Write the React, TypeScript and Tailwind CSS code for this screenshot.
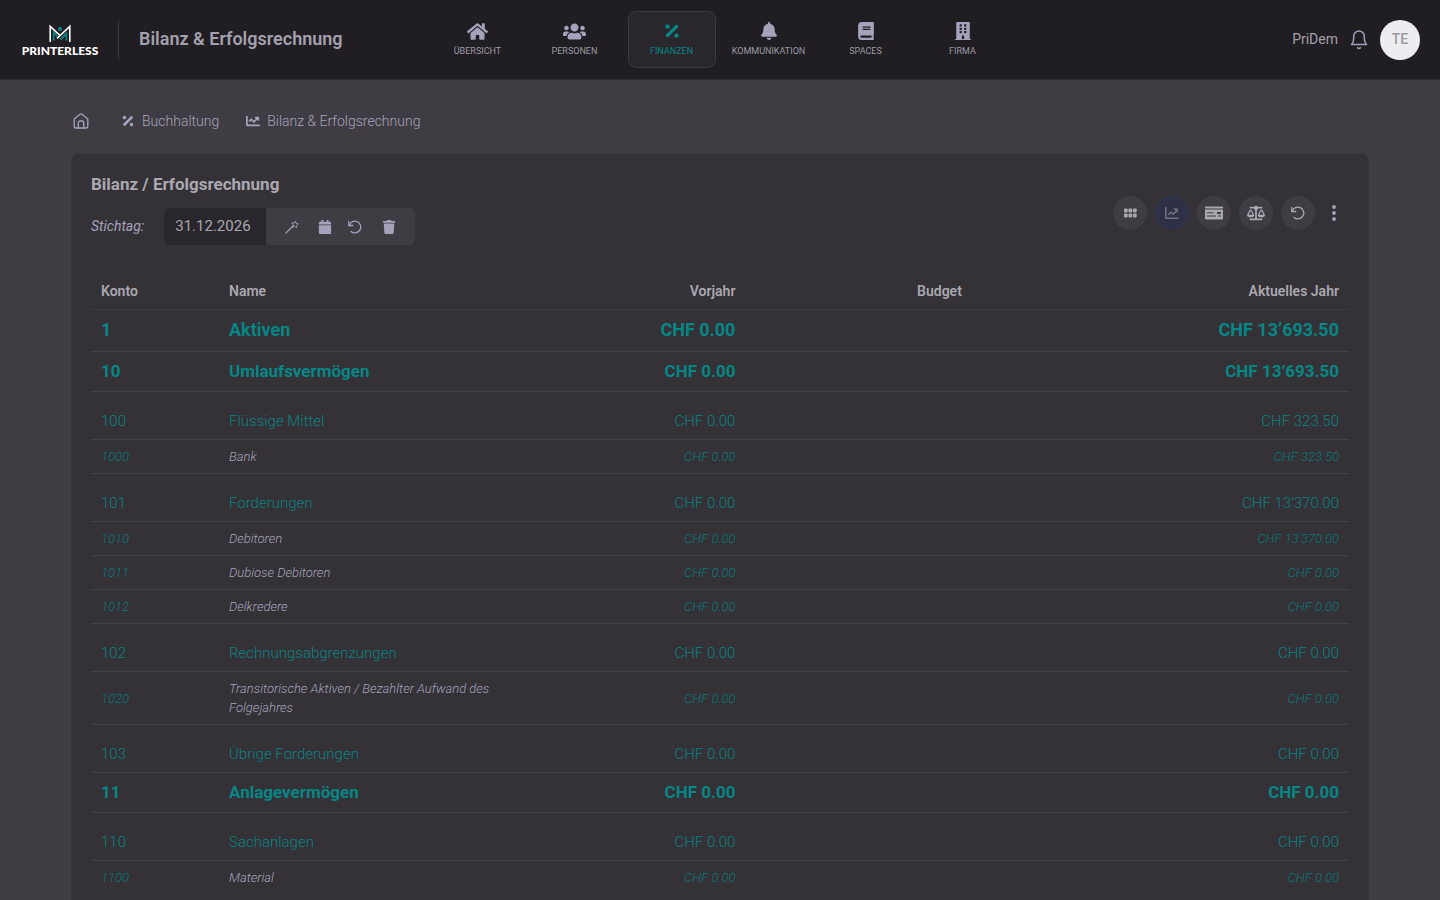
import type { ReactNode } from "react";
import {
  FaBalanceScale,
  FaBell,
  FaBook,
  FaBuilding,
  FaCalendar,
  FaChartLine,
  FaHome,
  FaPercentage,
  FaTrash,
  FaUsers,
} from "react-icons/fa";

type Level = 1 | 2 | 3 | 4;

interface Account {
  no: string;
  name: string;
  level: Level;
  prev: string;
  current: string;
}

const accounts: Account[] = [
  { no: "1", name: "Aktiven", level: 1, prev: "CHF 0.00", current: "CHF 13’693.50" },
  { no: "10", name: "Umlaufsvermögen", level: 2, prev: "CHF 0.00", current: "CHF 13’693.50" },
  { no: "100", name: "Flüssige Mittel", level: 3, prev: "CHF 0.00", current: "CHF 323.50" },
  { no: "1000", name: "Bank", level: 4, prev: "CHF 0.00", current: "CHF 323.50" },
  { no: "101", name: "Forderungen", level: 3, prev: "CHF 0.00", current: "CHF 13’370.00" },
  { no: "1010", name: "Debitoren", level: 4, prev: "CHF 0.00", current: "CHF 13’370.00" },
  { no: "1011", name: "Dubiose Debitoren", level: 4, prev: "CHF 0.00", current: "CHF 0.00" },
  { no: "1012", name: "Delkredere", level: 4, prev: "CHF 0.00", current: "CHF 0.00" },
  { no: "102", name: "Rechnungsabgrenzungen", level: 3, prev: "CHF 0.00", current: "CHF 0.00" },
  { no: "1020", name: "Transitorische Aktiven / Bezahlter Aufwand des Folgejahres", level: 4, prev: "CHF 0.00", current: "CHF 0.00" },
  { no: "103", name: "Übrige Forderungen", level: 3, prev: "CHF 0.00", current: "CHF 0.00" },
  { no: "11", name: "Anlagevermögen", level: 2, prev: "CHF 0.00", current: "CHF 0.00" },
  { no: "110", name: "Sachanlagen", level: 3, prev: "CHF 0.00", current: "CHF 0.00" },
  { no: "1100", name: "Material", level: 4, prev: "CHF 0.00", current: "CHF 0.00" },
];

const rowStyles: Record<Level, string> = {
  1: "text-[18px] leading-[25px] font-bold text-[#058785] *:pt-[7px] *:pb-[9px]",
  2: "text-[17px] leading-[23px] font-bold text-[#058785] *:py-2",
  3: "text-[15px] leading-[23px] font-light text-[#078482] *:pt-[18px] *:pb-[6px]",
  4: "text-[13px] leading-[19px] font-light italic text-[#087c7a] *:py-[7px]",
};

const navItems = [
  { label: "ÜBERSICHT", icon: <FaHome size={21} /> },
  { label: "PERSONEN", icon: <FaUsers size={23} /> },
  { label: "FINANZEN", icon: <FaPercentage size={18} />, active: true },
  { label: "KOMMUNIKATION", icon: <FaBell size={18} /> },
  { label: "SPACES", icon: <FaBook size={18} /> },
  { label: "FIRMA", icon: <FaBuilding size={18} /> },
];

function Logo() {
  return (
    <a href="#" aria-label="Printerless" className="flex w-[78px] flex-col items-center pt-0.5 pl-0.5">
      <svg width="22" height="19" viewBox="0 0 22 19" fill="none">
        <path d="M4.700 16.500V8.500L8.500 12.500M17.300 16.500V9.500L11.500 15.500" stroke="#0b8583" strokeWidth="1.800" />
        <circle cx="11" cy="5" r="2" fill="#0b8583" />
        <path d="M1.200 18V2.300L11 11.500" stroke="#fff" strokeWidth="1.600" />
        <path d="M8 14.500L20.800 2.300V18" stroke="#fff" strokeWidth="1.600" />
      </svg>
      <span className="mt-0.5 font-[Lato,sans-serif] text-[12px] leading-[12px] font-black text-white">PRINTERLESS</span>
    </a>
  );
}

function BellOutline() {
  return (
    <svg width="18" height="20" viewBox="0 0 18 20" fill="none" stroke="#a5a3bb" strokeWidth="1.500" strokeLinecap="round" strokeLinejoin="round">
      <path d="M1.500 14.500C3 13 3.700 11 3.700 8.500V6.300a5.300 5.300 0 0 1 10.600 0V8.500c0 2.500.7 4.500 2.200 6z" />
      <path d="M7.500 17.800c.8.900 2.200.9 3 0" />
    </svg>
  );
}

function HomeOutline() {
  return (
    <svg width="16" height="16" viewBox="0 0 16 16" fill="none" stroke="#a5a3bb" strokeWidth="1.300" strokeLinecap="round" strokeLinejoin="round">
      <path d="M1.200 6.500q0-.7.500-1.100L7.100 1.200q.9-.6 1.800 0l5.400 4.200q.5.400.5 1.100v7.100a1.400 1.400 0 0 1-1.400 1.400H2.600a1.400 1.400 0 0 1-1.400-1.400z" />
      <path d="M5.300 15V9.500a1.500 1.500 0 0 1 1.500-1.500h2.400a1.500 1.500 0 0 1 1.500 1.500V15" />
    </svg>
  );
}

function Wand() {
  return (
    <svg width="14" height="14" viewBox="0 0 14 14" fill="none" stroke="#a5a3bb" strokeLinecap="round" strokeLinejoin="round">
      <path d="M.8 13.200L8.500 5.500" strokeWidth="1.200" />
      <path d="M7 2.800l2.200.4L10.500 1l.6 2.400 2.300.5-1.900 1.500.3 2.400-2.100-1.300-2.100.7.600-2.200z" strokeWidth=".8" />
    </svg>
  );
}

function Undo() {
  return (
    <svg width="14" height="14" viewBox="0 0 14 14" fill="none" stroke="currentColor" strokeWidth="1.300" strokeLinecap="round" strokeLinejoin="round">
      <path d="M.8 1.500v4h4" />
      <path d="M1.200 5.300A5.900 5.900 0 1 1 3 11.500" />
    </svg>
  );
}

function Grid() {
  return (
    <svg width="13" height="10" viewBox="0 0 13 10" fill="currentColor">
      {[0, 4.500, 9].map((x) =>
        [0.5, 5.500].map((y) => <rect key={`${x}-${y}`} x={x} y={y} width="3.700" height="3.900" rx=".8" />),
      )}
    </svg>
  );
}

function ChartLines() {
  return (
    <svg width="14" height="12" viewBox="0 0 14 12" fill="none" stroke="currentColor" strokeWidth="1.600" strokeLinecap="round" strokeLinejoin="round">
      <path d="M.8.800v10.400h12.400" />
      <path d="M3.800 7.200L6 5l2.200 2.200L11.500 4" />
      <path d="M9.300 1.800h3.200v3.200z" fill="currentColor" strokeWidth=".8" />
    </svg>
  );
}

function MoneyCheck() {
  return (
    <svg width="18" height="14" viewBox="0 0 18 14" fill="currentColor">
      <path d="M.6.500h16.800q.6 0 .6.600V2.500H0V1.100Q0 .5.600.500z" />
      <path
        fillRule="evenodd"
        d="M0 3.500h18v9.300q0 .7-.7.700H.7q-.7 0-.7-.7zM2 6.300v1h6.500v-1zM2 9.500v1h9v-1zM12 6v2h4v-2zM13 9.500v1h3v-1z"
      />
    </svg>
  );
}

function Dots() {
  return (
    <svg width="4" height="16" viewBox="0 0 4 16" fill="currentColor">
      <circle cx="2" cy="2" r="1.900" />
      <circle cx="2" cy="8" r="1.900" />
      <circle cx="2" cy="14" r="1.900" />
    </svg>
  );
}

function RoundButton({ label, active, children }: { label: string; active?: boolean; children: ReactNode }) {
  return (
    <button
      aria-label={label}
      className={`flex size-[34px] items-center justify-center rounded-full ${active ? "bg-[#2d3046] text-[#72727e]" : "bg-[#3f3c43] text-[#aaa8b0]"}`}
    >
      {children}
    </button>
  );
}

function Header() {
  return (
    <header className="grid h-20 grid-cols-[1fr_auto_1fr] items-center border-b border-[#2e2b31] bg-[#201d23] px-5">
      <div className="flex items-center">
        <Logo />
        <div className="ml-5 h-[38px] w-px bg-[#3c3940]" />
        <h1 className="ml-5 pb-0.5 text-[18px] leading-6 font-semibold whitespace-nowrap text-[#a3a1ac]">Bilanz &amp; Erfolgsrechnung</h1>
      </div>
      <nav className="flex gap-[9px]">
        {navItems.map((item) => (
          <a
            key={item.label}
            href="#"
            className={`flex h-[57px] w-[88px] flex-col items-center rounded-lg border pt-[7px] ${item.active ? "border-[#3d3a41] bg-[#29262c] text-[#058785]" : "border-transparent text-[#a5a3bb]"}`}
          >
            <span className="flex h-6 items-center">{item.icon}</span>
            <span className={`mt-[2px] text-[9px] leading-3 ${item.active ? "" : "text-[#9c9aa2]"}`}>{item.label}</span>
          </a>
        ))}
      </nav>
      <div className="flex items-center justify-end">
        <span className="text-[14px] text-[#a3a1a9]">PriDem</span>
        <button aria-label="Benachrichtigungen" className="ml-3">
          <BellOutline />
        </button>
        <button className="ml-3 size-10 rounded-full bg-[#edecf0] text-[14px] font-medium text-[#9b9a9d]">TE</button>
      </div>
    </header>
  );
}

function Breadcrumbs() {
  return (
    <nav aria-label="Brotkrumen" className="flex items-center px-0.5 text-[14px] leading-5 font-light text-[#a5a3bb]">
      <a href="#" aria-label="Startseite">
        <HomeOutline />
      </a>
      <a href="#" className="ml-8 flex items-center gap-[7px]">
        <FaPercentage size={14} />
        Buchhaltung
      </a>
      <a href="#" className="ml-[27px] flex items-center gap-[7px]">
        <FaChartLine size={14} />
        Bilanz &amp; Erfolgsrechnung
      </a>
    </nav>
  );
}

function Toolbar() {
  return (
    <div className="flex items-start justify-between">
      <div>
        <h2 className="text-[17px] leading-5 font-bold text-[#aaa8b0]">Bilanz / Erfolgsrechnung</h2>
        <div className="mt-[14px] flex items-center">
          <label htmlFor="key-date" className="text-[14px] text-[#a5a3bb] italic">
            Stichtag:
          </label>
          <div className="ml-5 flex h-[37px] overflow-hidden rounded-md bg-[#3f3c43]">
            <input
              id="key-date"
              defaultValue="31.12.2026"
              className="w-[102px] bg-[#29262c] pl-[11px] text-[15px] text-[#aaa8b0] outline-none"
            />
            <div className="flex w-[149px] items-center pl-[19px] text-[#a5a3bb]">
              <button aria-label="Automatisch">
                <Wand />
              </button>
              <button aria-label="Kalender" className="ml-[19px]">
                <FaCalendar size={14} />
              </button>
              <button aria-label="Zurücksetzen" className="ml-4">
                <Undo />
              </button>
              <button aria-label="Löschen" className="ml-5">
                <FaTrash size={14} />
              </button>
            </div>
          </div>
        </div>
      </div>
      <div className="mt-[22px] flex items-center gap-2">
        <RoundButton label="Übersicht">
          <Grid />
        </RoundButton>
        <RoundButton label="Diagramm" active>
          <ChartLines />
        </RoundButton>
        <RoundButton label="Budget">
          <MoneyCheck />
        </RoundButton>
        <RoundButton label="Bilanz">
          <FaBalanceScale size={18} />
        </RoundButton>
        <RoundButton label="Neu laden">
          <Undo />
        </RoundButton>
        <button aria-label="Mehr" className="flex w-[26px] items-center pl-[9px] text-[#a5a3bb]">
          <Dots />
        </button>
      </div>
    </div>
  );
}

function AccountTable() {
  return (
    <table className="mt-7 w-full table-fixed border-separate border-spacing-0 text-left">
      <colgroup>
        <col className="w-[128px]" />
        <col className="w-[300px]" />
        <col className="w-[18%]" />
        <col className="w-[18%]" />
        <col />
      </colgroup>
      <thead>
        <tr className="text-[14px] leading-5 text-[#aaa8b0] *:border-b *:border-[#3f3c43] *:px-2.5 *:py-2 *:font-semibold">
          <th>Konto</th>
          <th>Name</th>
          <th className="text-right">Vorjahr</th>
          <th className="text-right">Budget</th>
          <th className="text-right">Aktuelles Jahr</th>
        </tr>
      </thead>
      <tbody>
        {accounts.map((a) => (
          <tr key={a.no} className={`*:border-b *:border-[#434047] *:px-2.5 last:*:border-transparent ${rowStyles[a.level]}`}>
            <td>{a.no}</td>
            <td className={a.level === 4 ? "text-[#a5a3bb]" : ""}>{a.name}</td>
            <td className="text-right">{a.prev}</td>
            <td />
            <td className="text-right">{a.current}</td>
          </tr>
        ))}
      </tbody>
    </table>
  );
}

export default function App() {
  return (
    <div className="h-screen overflow-hidden bg-[#3f3c43] font-[Roboto,sans-serif]">
      <Header />
      <main className="px-[71px] pt-[31px]">
        <Breadcrumbs />
        <section className="mt-[22px] rounded-lg border border-[#37343a] bg-[#343137] px-[19px] pt-[20px] pb-10">
          <Toolbar />
          <AccountTable />
        </section>
      </main>
    </div>
  );
}
